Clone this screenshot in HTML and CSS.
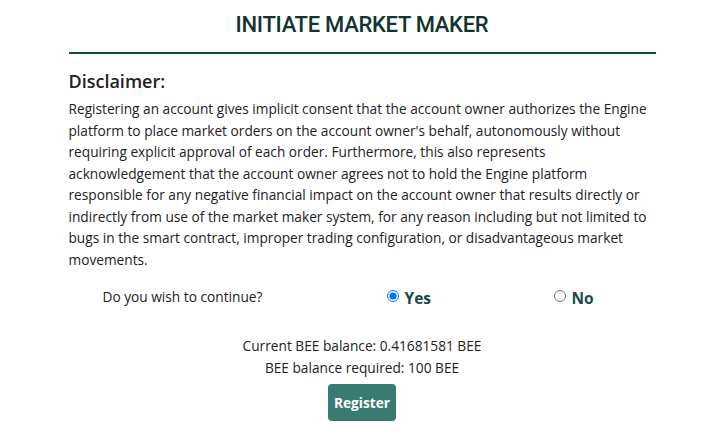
FILE: index.html
```html
<!DOCTYPE html>
<html lang="en">
<head>
  <meta charset="UTF-8">
  <meta name="viewport" content="width=device-width, initial-scale=1.0">
  <title>Initiate Market Maker</title>
  <link rel="stylesheet" href="styles.css">
</head>
<body>
  <div class="panel">
    <h2 class="panel-title">INITIATE MARKET MAKER</h2>

    <h3 class="disclaimer-title">Disclaimer:</h3>
    <p class="disclaimer-text">
      Registering an account gives implicit consent that the account owner authorizes the Engine<br>
      platform to place market orders on the account owner's behalf, autonomously without<br>
      requiring explicit approval of each order. Furthermore, this also represents<br>
      acknowledgement that the account owner agrees not to hold the Engine platform<br>
      responsible for any negative financial impact on the account owner that results directly or<br>
      indirectly from use of the market maker system, for any reason including but not limited to<br>
      bugs in the smart contract, improper trading configuration, or disadvantageous market<br>
      movements.
    </p>

    <div class="choice-row">
      <span class="choice-question">Do you wish to continue?</span>
      <label class="choice choice-yes">
        <input type="radio" name="continue" value="yes" checked>
        <span>Yes</span>
      </label>
      <label class="choice">
        <input type="radio" name="continue" value="no">
        <span>No</span>
      </label>
    </div>

    <div class="balance">
      <div>Current BEE balance: 0.41681581 BEE</div>
      <div>BEE balance required: 100 BEE</div>
    </div>

    <div class="actions">
      <button class="register-btn" type="button">Register</button>
    </div>
  </div>
</body>
</html>
```

FILE: styles.css
```css
/* Market maker registration panel */
body {
  font-family: "Open Sans", "Noto Sans", Arial, sans-serif;
  background-color: #fff;
  color: #212529;
  margin: 0;
}
.panel {
  width: 587px;
  margin: 0 auto;
}
.panel-title {
  margin: 0;
  padding: 9px 0 11px;
  font-family: Roboto, "Open Sans", sans-serif;
  font-size: 22px;
  font-weight: 500;
  letter-spacing: -0.3px;
  text-align: center;
  color: #123430;
  border-bottom: 2px solid #134a45;
  line-height: 32px;
}
.disclaimer-title {
  margin: 14px 0 0;
  font-size: 18px;
  font-weight: 600;
  line-height: 26px;
  color: #222;
}
.disclaimer-text {
  margin: 4px 0 0;
  font-size: 13.7px;
  line-height: 21.5px;
  color: #222;
  white-space: nowrap;
}
.choice-row {
  display: flex;
  align-items: center;
  padding: 14px 0 0 34px;
  font-size: 13.7px;
}
.choice-question {
  width: 284px;
  color: #222;
}
.choice {
  display: flex;
  align-items: center;
  gap: 6px;
  font-size: 15.5px;
  font-weight: 700;
  color: #1a4b47;
  padding-top: 3px;
}
.choice input {
  margin: 0;
  width: 12px;
  height: 12px;
  position: relative;
  top: -2px;
}
.choice-yes {
  width: 167px;
}
.balance {
  margin-top: 26px;
  text-align: center;
  font-size: 13.7px;
  line-height: 22px;
  color: #222;
}
.actions {
  text-align: center;
  margin-top: 5px;
}
.register-btn {
  font-family: inherit;
  font-size: 13.7px;
  font-weight: 700;
  color: #fff;
  background-color: #3a7b71;
  border: none;
  border-radius: 4px;
  padding: 0;
  width: 68px;
  height: 37px;
  cursor: pointer;
}
```
